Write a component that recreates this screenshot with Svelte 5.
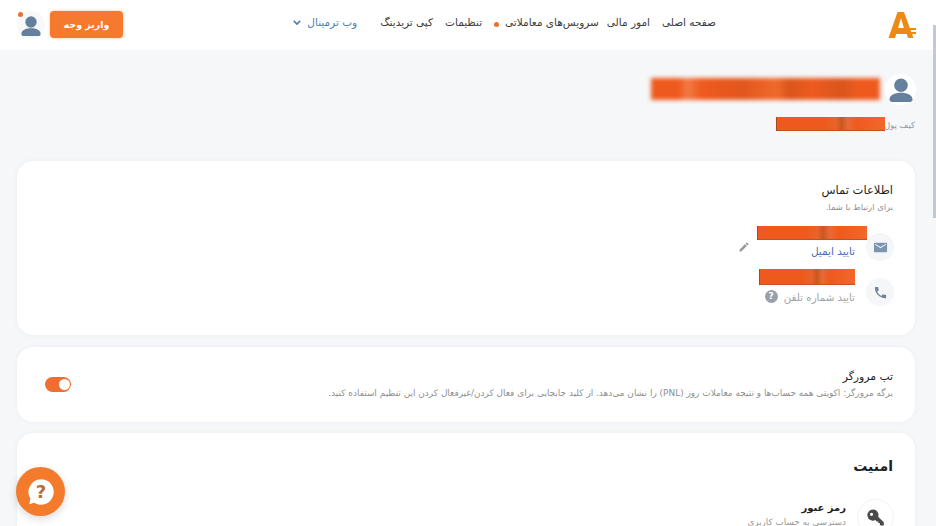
<svelte:options runes={true} />
<script>
  const nav = ['صفحه اصلی', 'امور مالی', 'سرویس‌های معاملاتی', 'تنظیمات', 'کپی تریدینگ'];
</script>

{#snippet avatar()}
  <svg viewBox="0 0 24 24" class="avatar-svg" aria-hidden="true">
    <circle cx="12" cy="7.200" r="6.800" fill="#64809c"/>
    <path d="M.5 21.500c0-4.500 5-6.800 11.500-6.800s11.500 2.300 11.500 6.800c0 1.600-1.200 2.500-2.500 2.500H3c-1.300 0-2.500-.9-2.500-2.500z" fill="#64809c"/>
  </svg>
{/snippet}

<div class="page" dir="rtl">
  <header class="topbar">
    <svg class="logo" viewBox="0 0 28 28" aria-hidden="true">
      <path d="M9.500 1h6.500l9.500 26h-5.500l-1.500-5H8.500l-1.500 5H.5z M13 7l-3 10.500h6z" fill="#ee8a14" fill-rule="evenodd"/>
      <rect x="5" y="17" width="23" height="2" fill="#ee8a14"/>
      <rect x="5" y="21" width="23" height="2" fill="#ee8a14"/>
    </svg>
    <nav class="nav">
      {#each nav as item, i}
        <a class="nav-item" class:dotted={i === 2} class:tight={i === 1}>{item}</a>
      {/each}
      <a class="nav-item terminal">
        وب ترمینال
        <svg viewBox="0 0 10 6" class="chev" aria-hidden="true"><path d="M1 1l4 4 4-4" fill="none" stroke="#4b7fa8" stroke-width="2"/></svg>
      </a>
    </nav>
    <div class="actions">
      <button class="deposit">واریز وجه</button>
      <div class="top-avatar">
        {@render avatar()}
        <span class="badge"></span>
      </div>
    </div>
  </header>

  <main class="content">
    <section class="profile">
      <div class="profile-row">
        <div class="big-avatar">{@render avatar()}</div>
        <div class="redact blurred"></div>
      </div>
      <div class="wallet">
        <span>کیف پول</span>
        <div class="redact wallet-bar"></div>
      </div>
    </section>

    <section class="card contact">
      <h2>اطلاعات تماس</h2>
      <p class="sub">برای ارتباط با شما.</p>
      <div class="contact-row email">
        <div class="round">
          <svg viewBox="0 0 24 24" aria-hidden="true"><path d="M3 4.500h18a1.500 1.500 0 0 1 1.500 1.500v12a1.500 1.500 0 0 1-1.500 1.500H3A1.500 1.500 0 0 1 1.500 18V6A1.500 1.500 0 0 1 3 4.500zm9 8.500 8.500-5.300V6L12 11.300 3.500 6v1.700z" fill="#7d93ae" fill-rule="evenodd"/></svg>
        </div>
        <div class="contact-text">
          <div class="redact email-bar"></div>
          <a class="verify">تایید ایمیل</a>
        </div>
        <svg class="pencil" viewBox="0 0 24 24" aria-hidden="true"><path d="M3 17.250V21h3.750L17.810 9.940l-3.750-3.750L3 17.250zM20.710 7.040a1 1 0 0 0 0-1.410l-2.340-2.340a1 1 0 0 0-1.410 0l-1.830 1.830 3.750 3.750 1.830-1.830z" fill="#9a9a9a"/></svg>
      </div>
      <div class="contact-row phone">
        <div class="round">
          <svg viewBox="0 0 24 24" aria-hidden="true"><path d="M6.600 10.800c1.400 2.800 3.800 5.100 6.600 6.600l2.200-2.200c.3-.3.700-.4 1-.2 1.100.4 2.300.6 3.600.6.600 0 1 .4 1 1V20c0 .6-.4 1-1 1C10.600 21 3 13.400 3 4c0-.6.400-1 1-1h3.500c.6 0 1 .4 1 1 0 1.300.2 2.500.6 3.600.1.300 0 .7-.2 1z" fill="#6f8299"/></svg>
        </div>
        <div class="contact-text">
          <div class="redact phone-bar"></div>
          <div class="verify-phone">
            <span>تایید شماره تلفن</span>
            <span class="help">?</span>
          </div>
        </div>
      </div>
    </section>

    <section class="card browser">
      <div class="browser-text">
        <h2>تب مرورگر</h2>
        <p class="sub wide">برگه مرورگر: اکویتی همه حساب‌ها و نتیجه معاملات روز (PNL) را نشان می‌دهد. از کلید جابجایی برای فعال کردن/غیرفعال کردن این تنظیم استفاده کنید.</p>
      </div>
      <div class="toggle"><span class="knob"></span></div>
    </section>

    <section class="card security">
      <h2 class="sec-title">امنیت</h2>
      <div class="pw-row">
        <div class="round key">
          <svg viewBox="0 0 24 24" aria-hidden="true"><path d="M9 2a7 7 0 0 1 6.600 9.300L22.500 18v4h-4l-1-1v-2h-2v-2h-2l-1.700-1.700A7 7 0 1 1 9 2zM7 6a2 2 0 1 0 0 4 2 2 0 0 0 0-4z" fill="#4a4a4a" fill-rule="evenodd"/></svg>
        </div>
        <div class="pw-text">
          <div class="pw-title">رمز عبور</div>
          <div class="pw-sub">دسترسی به حساب کاربری</div>
        </div>
      </div>
    </section>
  </main>

  <button class="help-fab" aria-label="help">
    <svg viewBox="0 0 32 32" aria-hidden="true">
      <path d="M16 4a12 12 0 1 1-6.500 22.100L5 27.500l1-5.200A12 12 0 0 1 16 4z" fill="#fff"/>
      <text x="16" y="22" text-anchor="middle" class="q">?</text>
    </svg>
  </button>
</div>

<style>
  :global(body) {
    margin: 0;
    background: #f5f7f9;
    overflow: hidden;
  }
  .page {
    position: relative;
    width: 936px;
    height: 526px;
    overflow: hidden;
    font-family: "DejaVu Sans", "Noto Sans", sans-serif;
    color: #2b2b2b;
    background: #f5f7f9;
  }
  .page::after {
    content: "";
    position: absolute;
    top: 25px;
    right: 0;
    width: 3px;
    height: 193px;
    background: #c3c9d1;
  }
  .topbar {
    height: 50px;
    box-sizing: border-box;
    background: #fff;
    display: flex;
    align-items: center;
    padding: 0 20px 0 17px;
  }
  .logo { width: 28px; height: 28px; flex: none; margin-left: 172px; margin-right: 0; }
  .nav {
    display: flex;
    align-items: center;
    gap: 12px;
    flex: 1;
    font-size: 10.500px;
    margin-bottom: 6px;
  }
  .nav-item { color: #3c3c3c; white-space: nowrap; }
  .tight { margin-left: -4px; }
  .dotted { position: relative; margin-left: 11px; }
  .dotted::after {
    content: "";
    position: absolute;
    left: -11.500px;
    top: 6px;
    width: 5px;
    height: 5px;
    border-radius: 50%;
    background: #e9712b;
  }
  .terminal {
    color: #4b7fa8;
    margin-right: 11px;
    display: flex;
    align-items: center;
    gap: 6px;
  }
  .chev { width: 8px; height: 5px; }
  .actions { display: flex; align-items: center; gap: 5px; margin-bottom: 1px; }
  .deposit {
    width: 73px;
    height: 27px;
    border: none;
    border-radius: 4px;
    background: #f57a30;
    color: #fff;
    font: bold 9.500px "DejaVu Sans", sans-serif;
    box-shadow: 0 0 3px rgba(245, 122, 48, .5);
  }
  .top-avatar {
    position: relative;
    width: 28px;
    height: 28px;
    border-radius: 50%;
    background: #f7f8fa;
    display: flex;
    align-items: center;
    justify-content: center;
  }
  .top-avatar .avatar-svg { width: 20px; height: 20px; margin-top: 3px; }
  .badge {
    position: absolute;
    top: 1px;
    left: 1px;
    width: 5px;
    height: 5px;
    border-radius: 50%;
    background: #e9712b;
  }

  .content {
    padding: 21px 21px 0 17px;
    display: flex;
    flex-direction: column;
  }
  .profile { height: 90px; }
  .profile-row { display: flex; align-items: center; gap: 5px; }
  .big-avatar {
    width: 31px;
    height: 31px;
    border-radius: 50%;
    background: #fff;
    display: flex;
    align-items: center;
    justify-content: center;
    flex: none;
    margin: 3px -1px 0 0;
  }
  .big-avatar .avatar-svg { width: 24px; height: 24px; }
  .redact {
    background: linear-gradient(90deg, #ee5a1e 0 45%, #e8642a 55%, #c9571f 60%, #e86a36 66%, #ee5a1e 74%, #f2672c 100%);
    box-shadow: inset 1px 0 #a8481f, inset 0 -1px #c4511d;
  }
  .blurred {
    width: 229px;
    height: 22px;
    margin-top: 1px;
    filter: blur(2px);
    background: linear-gradient(90deg, #ee5a1e 0 12%, #f37a46 16%, #ee5a1e 22%, #e2561e 40%, #f06a2c 55%, #d9551c 60%, #ee5a1e 70%, #d9551c 84%, #ee5a1e 90%);
    box-shadow: none;
  }
  .wallet {
    display: flex;
    align-items: center;
    margin-top: 12px;
    font-size: 8.500px;
    color: #8d99a6;
  }
  .wallet span { margin-top: 1px; width: 30px; white-space: nowrap; }
  .wallet-bar { width: 109px; height: 14px; }

  .card {
    background: #fff;
    border-radius: 16px;
    box-shadow: 0 0 4px rgba(120, 130, 150, .08);
    box-sizing: border-box;
    padding: 22px 22px 0;
  }
  .card h2 {
    margin: 0;
    font-size: 11.500px;
    font-weight: 400;
    color: #222;
  }
  .sub {
    margin: 5px 0 0;
    font-size: 8.400px;
    color: #8f8f8f;
  }
  .contact { height: 174px; }
  .contact-row { display: flex; align-items: flex-start; gap: 11px; }
  .email { margin-top: 14px; }
  .phone { margin-top: 8px; }
  .round {
    width: 28px;
    height: 28px;
    border-radius: 50%;
    background: #f5f6f8;
    display: flex;
    align-items: center;
    justify-content: center;
    flex: none;
    margin: 7px -1px 0 0;
  }
  .phone .round { margin-top: 9px; }
  .round svg { width: 15px; height: 15px; }
  .contact-text { display: flex; flex-direction: column; }
  .email-bar { width: 110px; height: 14px; margin-right: -12px; }
  .phone-bar { width: 96px; height: 16px; }
  .verify { color: #3e6fb5; font-size: 10.500px; margin-top: 5px; }
  .pencil { width: 12px; height: 12px; margin: 15px -4px 0 0; }
  .verify-phone {
    display: flex;
    align-items: center;
    gap: 6px;
    color: #a0a4a8;
    font-size: 10.300px;
    margin-top: 5px;
  }
  .help {
    width: 13px;
    height: 13px;
    border-radius: 50%;
    background: #9aa0ab;
    color: #fff;
    font: bold 9px/13px "DejaVu Sans", sans-serif;
    text-align: center;
  }

  .browser {
    height: 75px;
    margin-top: 12px;
    padding-top: 23px;
    display: flex;
    justify-content: space-between;
    padding-left: 28px;
  }
  .browser h2 { font-size: 10.800px; }
  .sub.wide { font-size: 8.950px; margin-top: 5px; white-space: nowrap; }
  .toggle {
    width: 26px;
    height: 15px;
    border-radius: 7.500px;
    background: #ee6f30;
    position: relative;
    margin-top: 7px;
  }
  .knob {
    position: absolute;
    left: 14px;
    top: 2px;
    width: 11px;
    height: 11px;
    border-radius: 50%;
    background: #fff;
  }
  .security {
    margin-top: 11px;
    height: 200px;
    padding-top: 25px;
  }
  .card .sec-title {
    font-size: 14px;
    font-weight: 700;
    color: #1d1d1d;
  }
  .pw-row { display: flex; gap: 11px; margin-top: 25px; }
  .round.key { width: 37px; height: 37px; background: #fff; border: 1px solid #f2f3f5; margin: 0 -1px 0 0; box-sizing: border-box; }
  .key svg { width: 19px; height: 19px; }
  .pw-text { padding-top: 3px; }
  .pw-title { font-size: 10px; font-weight: 700; color: #222; }
  .pw-sub { font-size: 8.800px; color: #999; margin-top: 4px; }

  .help-fab {
    position: absolute;
    left: 16px;
    top: 467px;
    width: 49px;
    height: 49px;
    padding: 0;
    border: none;
    border-radius: 50%;
    background: #f47a2c;
    box-shadow: 0 3px 8px rgba(0, 0, 0, .15);
    display: flex;
    align-items: center;
    justify-content: center;
  }
  .help-fab svg { width: 34px; height: 34px; }
  .q { font: bold 17px "DejaVu Sans", sans-serif; fill: #b86d38; }
</style>
